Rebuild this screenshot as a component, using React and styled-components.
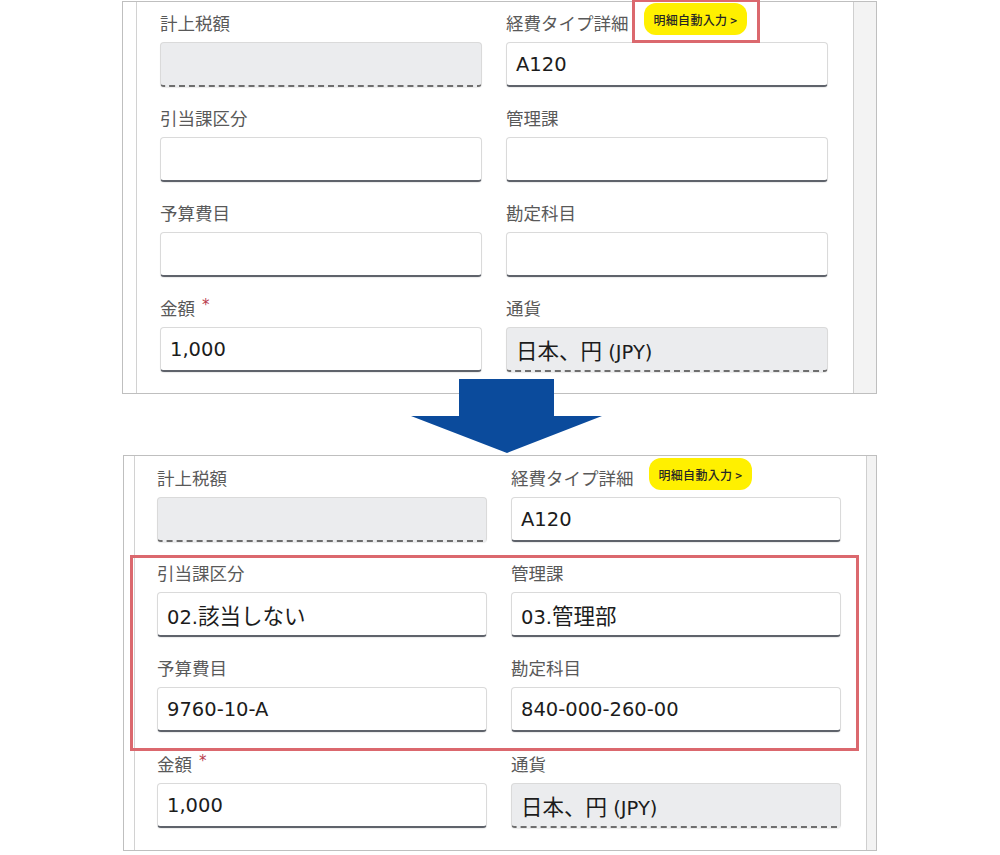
import React from "react";
import styled, { createGlobalStyle } from "styled-components";

const Global = createGlobalStyle`
  html, body { margin: 0; padding: 0; background: #ffffff; }
  body { font-family: "Noto Sans CJK JP", "Noto Sans", sans-serif; }
  * { box-sizing: border-box; }
`;

const Page = styled.div`
  width: 1000px;
  height: 855px;
  padding-top: 1px;
  display: flex;
  flex-direction: column;
  overflow: hidden;
`;

const Panel = styled.section`
  display: flex;
  margin-left: ${(p) => p.$left}px;
  width: ${(p) => p.$width}px;
  border: 1px solid #bfbfbf;
  background: #ffffff;
`;

const LeftStrip = styled.div`
  width: ${(p) => p.$w}px;
  flex: none;
  border-right: 1px solid #d2d2d2;
`;

const RightGutter = styled.div`
  width: ${(p) => p.$w}px;
  flex: none;
  border-left: 1px solid #cfcfcf;
  background: #f3f3f3;
`;

const Form = styled.div`
  flex: 1;
  display: grid;
  grid-template-columns: ${(p) => p.$col}px ${(p) => p.$col}px;
  column-gap: 24px;
  row-gap: 21px;
  align-content: start;
  padding: ${(p) => p.$pt}px 0 ${(p) => p.$pb}px ${(p) => p.$pl}px;
`;

const Group = styled.div`
  grid-column: 1 / -1;
  display: grid;
  grid-template-columns: ${(p) => p.$col}px ${(p) => p.$col}px;
  column-gap: 24px;
  row-gap: 21px;
  margin: -8px -18px -18px -27px;
  padding: 5px 15px 16px 24px;
  border: 3px solid #db686e;
`;

const Field = styled.div`
  display: flex;
  flex-direction: column;
  gap: 9px;
`;

const LabelRow = styled.div`
  height: 20px;
  display: flex;
  align-items: center;
  gap: 15px;
`;

const Label = styled.span`
  font-family: "Noto Sans CJK JP", sans-serif;
  font-size: 17.5px;
  line-height: 20px;
  color: #595959;
  white-space: nowrap;
`;

const Required = styled.span`
  color: #b83a4b;
  font-family: "DejaVu Sans", sans-serif;
  font-size: 15px;
  align-self: flex-start;
  margin-left: -8px;
  line-height: 14px;
`;

const Badge = styled.span`
  position: relative;
  align-self: flex-start;
  margin-top: -10px;
  height: 32px;
  padding: 0 10px;
  display: inline-flex;
  align-items: center;
  background: #fff000;
  border-radius: 12px;
  font-family: "Noto Sans CJK JP", sans-serif;
  font-size: 12px;
  font-weight: 500;
  color: #262626;
  white-space: nowrap;
  letter-spacing: 0.3px;
  &::before {
    content: "";
    display: ${(p) => (p.$highlight ? "block" : "none")};
    position: absolute;
    top: -4px;
    bottom: -8px;
    left: -12px;
    right: -13px;
    border: 3px solid #db686e;
  }
`;

const Input = styled.div`
  height: 45px;
  display: flex;
  align-items: center;
  padding-left: 9px;
  border: 1px solid #dadada;
  border-bottom: 2px ${(p) => (p.$readonly ? "dashed #6e6e6e" : "solid #5f636b")};
  border-radius: 4px;
  background: ${(p) => (p.$readonly ? "#ebecee" : "#ffffff")};
  box-shadow: 0 1px 1px rgba(0, 0, 0, 0.08);
  font-family: "DejaVu Sans", "Noto Sans CJK JP", sans-serif;
  font-size: 19.5px;
  color: #1c1c1c;
  white-space: pre;
`;

const Cjk = styled.span`
  font-family: "Noto Sans CJK JP", sans-serif;
  font-size: 21.5px;
`;

const ArrowWrap = styled.div`
  position: relative;
  z-index: 1;
  margin: -15px 0 2px 411px;
  width: 191px;
  height: 74px;
  line-height: 0;
`;

const CJK_RE = /([\u3000-\u30ff\u4e00-\u9fff\uff00-\uffef]+)/;

const renderValue = (text) =>
  text.split(CJK_RE).map((part, i) =>
    i % 2 === 1 ? <Cjk key={i}>{part}</Cjk> : part
  );

function FormField({ label, value, readonly, required, badge }) {
  return (
    <Field>
      <LabelRow>
        <Label>{label}</Label>
        {required && <Required>*</Required>}
        {badge && <Badge $highlight={badge === "highlight"}>明細自動入力 &gt;</Badge>}
      </LabelRow>
      <Input $readonly={readonly}>{value ? <span>{renderValue(value)}</span> : null}</Input>
    </Field>
  );
}

function Arrow() {
  return (
    <ArrowWrap>
      <svg width="191" height="74" viewBox="0 0 191 74">
        <path d="M48 0 H143 V37 H191 L96 74 L0 37 H48 Z" fill="#0b4b9c" />
      </svg>
    </ArrowWrap>
  );
}

export default function App() {
  return (
    <>
      <Global />
      <Page>
        <Panel $left={122} $width={755}>
          <LeftStrip $w={14} />
          <Form $col={322} $pt={11} $pb={21} $pl={23}>
            <FormField label="計上税額" readonly />
            <FormField label="経費タイプ詳細" value="A120" badge="highlight" />
            <FormField label="引当課区分" />
            <FormField label="管理課" />
            <FormField label="予算費目" />
            <FormField label="勘定科目" />
            <FormField label="金額" required value="1,000" />
            <FormField label="通貨" readonly value="日本、円 (JPY)" />
          </Form>
          <RightGutter $w={23} />
        </Panel>
        <Arrow />
        <Panel $left={123} $width={754}>
          <LeftStrip $w={11} />
          <Form $col={330} $pt={12} $pb={22} $pl={22}>
            <FormField label="計上税額" readonly />
            <FormField label="経費タイプ詳細" value="A120" badge="plain" />
            <Group $col={330}>
              <FormField label="引当課区分" value="02.該当しない" />
              <FormField label="管理課" value="03.管理部" />
              <FormField label="予算費目" value="9760-10-A" />
              <FormField label="勘定科目" value="840-000-260-00" />
            </Group>
            <FormField label="金額" required value="1,000" />
            <FormField label="通貨" readonly value="日本、円 (JPY)" />
          </Form>
          <RightGutter $w={10} />
        </Panel>
      </Page>
    </>
  );
}
